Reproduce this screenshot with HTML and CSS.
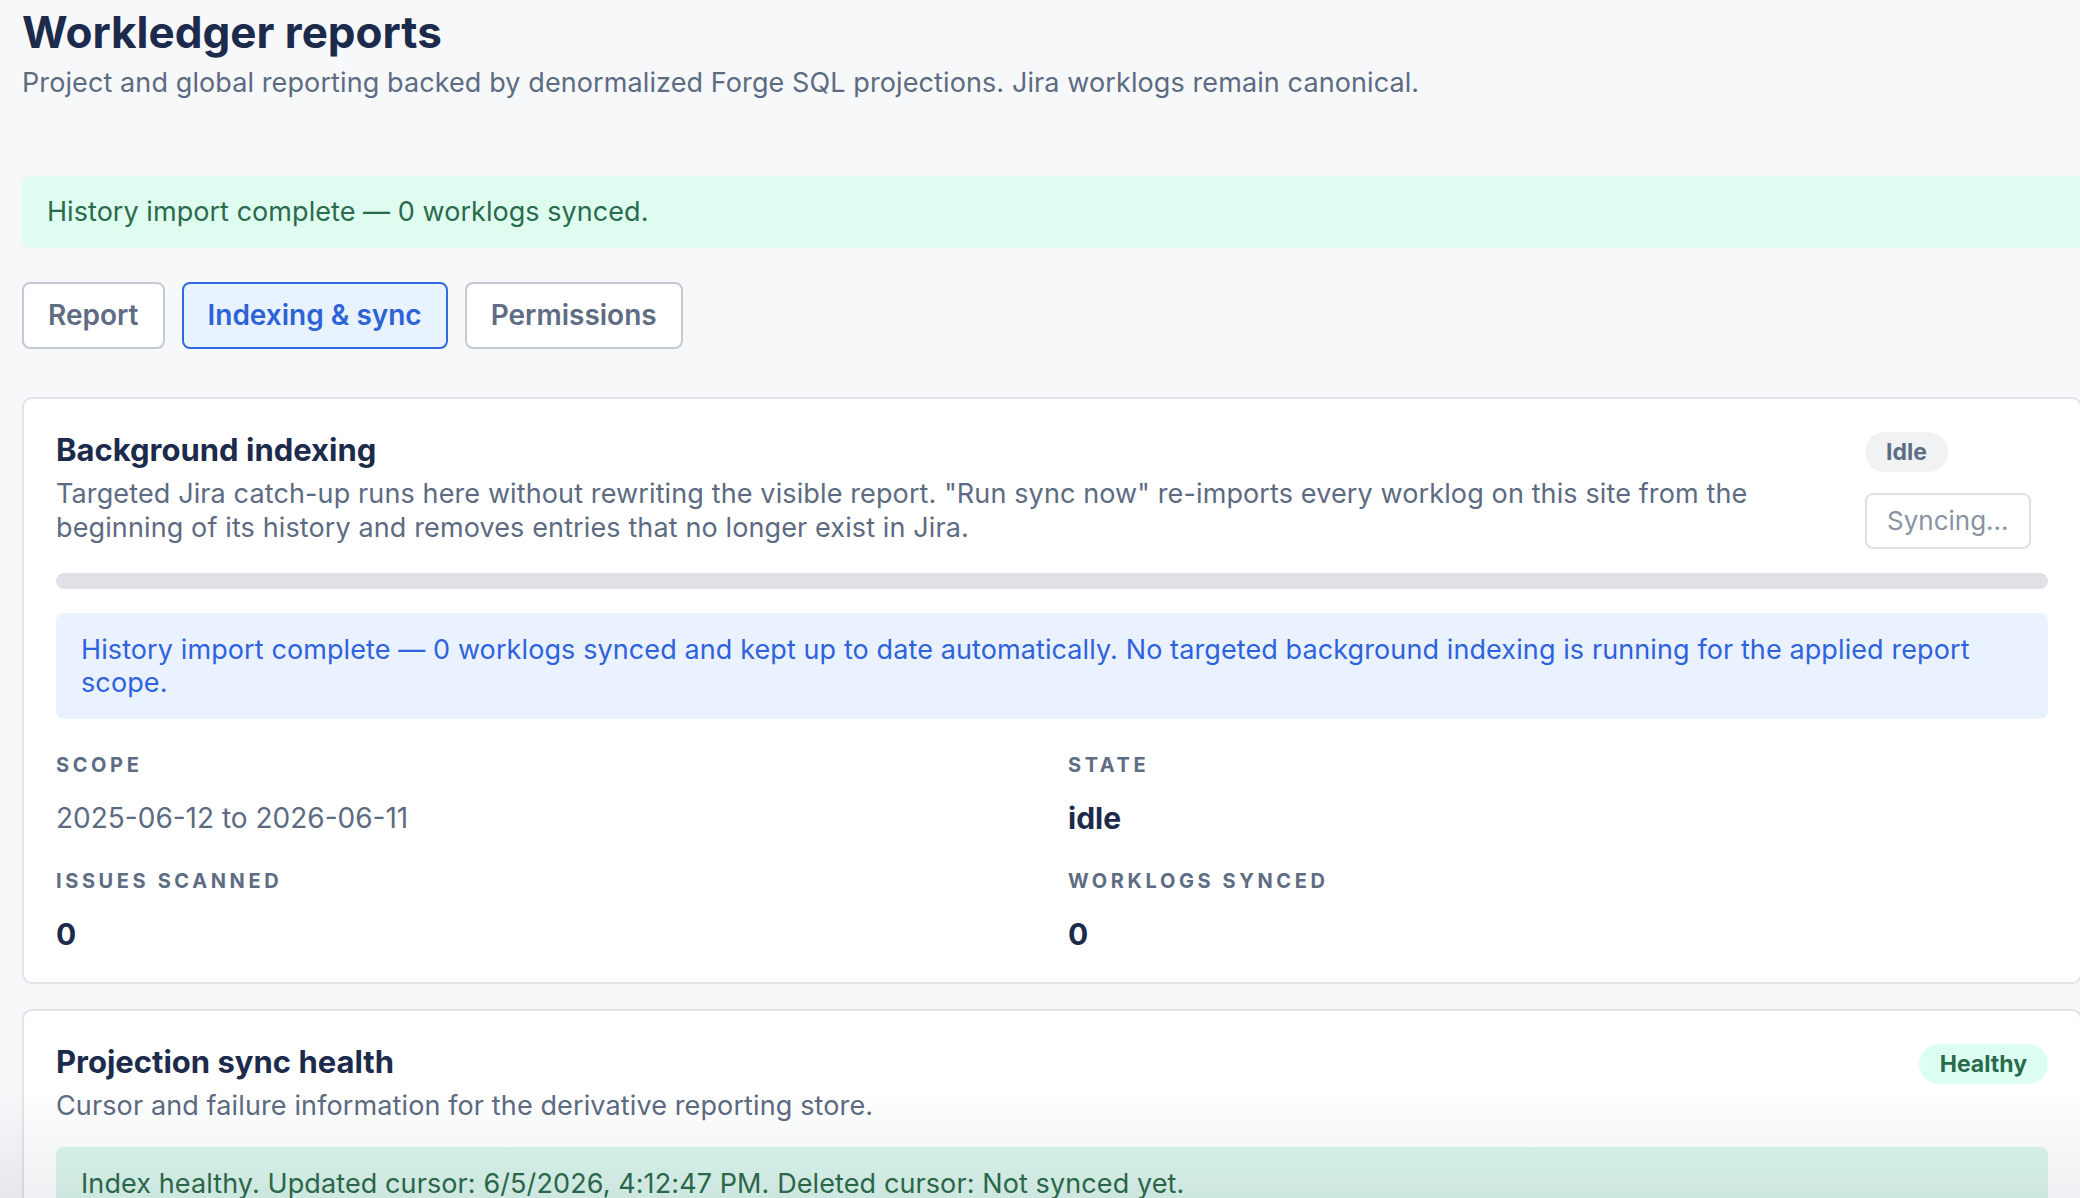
FILE: index.html
```html
<!DOCTYPE html>
<html lang="en">
<head>
  <meta charset="UTF-8">
  <meta name="viewport" content="width=device-width, initial-scale=1.0">
  <title>Workledger reports</title>
  <link rel="stylesheet" href="styles.css">
</head>
<body>
  <div class="page">
    <div class="page-header">
      <h1>Workledger reports</h1>
      <p>Project and global reporting backed by denormalized Forge SQL projections. Jira worklogs remain canonical.</p>
    </div>

    <div class="banner banner-success">History import complete — 0 worklogs synced.</div>

    <div class="tabs">
      <button class="tab">Report</button>
      <button class="tab active">Indexing &amp; sync</button>
      <button class="tab">Permissions</button>
    </div>

    <div class="card">
      <div class="card-header">
        <div class="card-title">
          <h2>Background indexing</h2>
          <p>Targeted Jira catch-up runs here without rewriting the visible report. "Run sync now" re-imports every worklog on this site from the beginning of its history and removes entries that no longer exist in Jira.</p>
        </div>
        <div class="card-aside">
          <span class="pill pill-idle">Idle</span>
          <button class="sync-button" disabled>Syncing...</button>
        </div>
      </div>

      <div class="progress"><div class="progress-fill" style="width: 0%"></div></div>

      <div class="notice notice-info">History import complete — 0 worklogs synced and kept up to date automatically. No targeted background indexing is running for the applied report scope.</div>

      <div class="stats">
        <div class="stat">
          <div class="stat-label">Scope</div>
          <div class="stat-value muted">2025-06-12 to 2026-06-11</div>
        </div>
        <div class="stat">
          <div class="stat-label">State</div>
          <div class="stat-value">idle</div>
        </div>
        <div class="stat">
          <div class="stat-label">Issues scanned</div>
          <div class="stat-value">0</div>
        </div>
        <div class="stat">
          <div class="stat-label">Worklogs synced</div>
          <div class="stat-value">0</div>
        </div>
      </div>
    </div>

    <div class="card">
      <div class="card-header">
        <div class="card-title">
          <h2>Projection sync health</h2>
          <p>Cursor and failure information for the derivative reporting store.</p>
        </div>
        <span class="pill pill-healthy">Healthy</span>
      </div>

      <div class="notice notice-success">Index healthy. Updated cursor: 6/5/2026, 4:12:47 PM. Deleted cursor: Not synced yet.</div>
    </div>
  </div>

  <div class="bottom-fade"></div>
</body>
</html>
```

FILE: styles.css
```css
html {
  overflow: hidden;
}

body {
  font-family: Inter, "Noto Sans", sans-serif;
  background-color: #f7f8fa;
  color: #1c2b4b;
  margin: 0;
  padding: 6px 0 0 22px;
}

.page {
  width: 2060px;
}

.page-header h1 {
  margin: 0;
  font-size: 44px;
  line-height: 53px;
  font-weight: 700;
  color: #1c2b4b;
}

.page-header p {
  margin: 7px 0 0;
  font-size: 27px;
  line-height: 34px;
  letter-spacing: 0.1px;
  color: #5d6b82;
}

.banner {
  margin-top: 76px;
  padding: 19px 25px;
  font-size: 27px;
  line-height: 34px;
  letter-spacing: 0.05px;
  border-radius: 8px 0 0 8px;
}

.banner-success {
  background-color: #dffcf0;
  color: #2a6b4b;
}

.tabs {
  display: flex;
  gap: 17px;
  margin-top: 34px;
}

.tab {
  font-family: inherit;
  font-size: 28px;
  line-height: 35px;
  font-weight: 600;
  color: #5e6c84;
  background-color: #ffffff;
  border: 2px solid #c5c9d1;
  border-radius: 8px;
  padding: 14px 24px;
  cursor: pointer;
}

.tab.active {
  color: #2c63d6;
  background-color: #e9f2ff;
  border-color: #2f6ae0;
}

.card {
  display: flex;
  flex-direction: column;
  gap: 24px;
  background-color: #ffffff;
  border: 2px solid #e1e4e8;
  border-radius: 10px;
  padding: 33px 32px 30px;
  margin-top: 48px;
}

.card + .card {
  margin-top: 25px;
}

.card-header {
  display: flex;
  justify-content: space-between;
  align-items: flex-start;
  gap: 40px;
}

.card-title h2 {
  margin: 0;
  font-size: 31px;
  line-height: 36px;
  font-weight: 700;
  color: #1c2b4b;
}

.card-title p {
  margin: 9px 0 0;
  font-size: 27px;
  line-height: 34px;
  letter-spacing: 0.12px;
  color: #5d6b82;
}

.card-aside {
  flex: 0 0 183px;
  display: flex;
  flex-direction: column;
  align-items: flex-start;
  gap: 21px;
}

.pill {
  display: inline-block;
  font-size: 23px;
  line-height: 28px;
  font-weight: 700;
  padding: 6px 21px;
  border-radius: 20px;
  white-space: nowrap;
}

.pill-idle {
  background-color: #f1f2f4;
  color: #5e6c84;
}

.pill-healthy {
  background-color: #dcfff1;
  color: #2a6b4b;
}

.sync-button {
  font-family: inherit;
  font-size: 26px;
  line-height: 34px;
  color: #8993a4;
  background-color: #ffffff;
  border: 2px solid #dfe1e6;
  border-radius: 8px;
  padding: 9px 20px;
}

.progress {
  height: 16px;
  background-color: #dfe1e6;
  border-radius: 8px;
  overflow: hidden;
}

.progress-fill {
  height: 100%;
  background-color: #2f6ae0;
}

.notice {
  padding: 20px 25px;
  font-size: 27px;
  line-height: 33px;
  letter-spacing: 0.1px;
  border-radius: 8px;
}

.notice-info {
  background-color: #e9f2fe;
  color: #2f62dd;
}

.notice-success {
  background-color: #dcf7ec;
  color: #2e6b4a;
}

.stats {
  display: grid;
  grid-template-columns: 1fr 1fr;
  column-gap: 32px;
  row-gap: 33px;
  margin-top: 10px;
}

.stat-label {
  font-size: 20px;
  line-height: 24px;
  font-weight: 700;
  text-transform: uppercase;
  letter-spacing: 3.6px;
  color: #5e6c84;
}

.stat-value {
  margin-top: 23px;
  font-size: 30px;
  line-height: 36px;
  font-weight: 700;
  color: #1c2b4b;
}

.stat-value.muted {
  font-size: 28px;
  font-weight: 400;
  color: #5d6b82;
}

.bottom-fade {
  position: fixed;
  left: 0;
  right: 0;
  bottom: 0;
  height: 110px;
  background: linear-gradient(to bottom, rgba(9, 30, 66, 0), rgba(9, 30, 66, 0.07));
  pointer-events: none;
}
```
